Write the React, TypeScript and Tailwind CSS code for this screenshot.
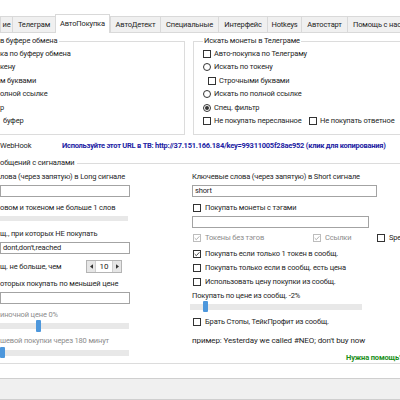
import React from 'react';

const tabs = [
  { label: 'ие', cls: 'w-[12px]' },
  { label: 'Телеграм', cls: 'w-[43px]' },
  { label: 'АвтоПокупка', cls: 'w-[55px]', active: true },
  { label: 'АвтоДетект', cls: 'w-[50px]' },
  { label: 'Специальные', cls: 'w-[58px]' },
  { label: 'Интерфейс', cls: 'w-[49px]' },
  { label: 'Hotkeys', cls: 'w-[34px]' },
  { label: 'Автостарт', cls: 'w-[46px]' },
  { label: 'Помощь с настройкой', cls: 'w-[70px] justify-start pl-[5px]' },
];

function Check({ checked, disabled }: { checked?: boolean; disabled?: boolean }) {
  return (
    <span
      className={`flex h-[8px] w-[8px] shrink-0 items-center justify-center border bg-white ${
        disabled ? 'border-[#bdbdbd]' : 'border-[#333333]'
      }`}
    >
      {checked && (
        <svg viewBox="0 0 6 6" className="h-[6px] w-[6px]">
          <path
            d="M0.7 3.1 2.3 4.7 5.4 1.3"
            fill="none"
            stroke={disabled ? '#a9a9a9' : '#333333'}
            strokeWidth="0.9"
          />
        </svg>
      )}
    </span>
  );
}

function Radio({ checked }: { checked?: boolean }) {
  return (
    <span className="flex h-[8px] w-[8px] shrink-0 items-center justify-center rounded-full border border-[#333333] bg-white">
      {checked && <span className="h-[4px] w-[4px] rounded-full bg-[#333333]" />}
    </span>
  );
}

function CheckRow({
  label,
  checked,
  disabled,
  className = '',
}: {
  label: string;
  checked?: boolean;
  disabled?: boolean;
  className?: string;
}) {
  return (
    <div className={`flex h-[12px] items-center gap-[4px] whitespace-nowrap ${className}`}>
      <Check checked={checked} disabled={disabled} />
      <span className={disabled ? 'text-[#8c8c8c]' : ''}>{label}</span>
    </div>
  );
}

function RadioRow({ label, checked }: { label: string; checked?: boolean }) {
  return (
    <div className="flex h-[13.5px] items-center gap-[3px] whitespace-nowrap">
      <Radio checked={checked} />
      <span>{label}</span>
    </div>
  );
}

function TextBox({ value, className = '' }: { value?: string; className?: string }) {
  return (
    <div
      className={`flex h-[12px] items-center border border-[#a3a3a3] bg-white pl-[2px] whitespace-nowrap ${className}`}
    >
      {value}
    </div>
  );
}

function Slider({
  trackCls,
  thumbCls,
  hCls,
}: {
  trackCls: string;
  thumbCls?: string;
  hCls: string;
}) {
  return (
    <div className={`relative flex items-center ${hCls}`}>
      <div className={`h-[6px] bg-[#e8e8e8] ${trackCls}`} />
      {thumbCls && <div className={`absolute top-0 h-full w-[5px] rounded-[1px] bg-[#4d97dc] ${thumbCls}`} />}
    </div>
  );
}

function Title({ text }: { text: string }) {
  return <div className="-mt-[7px] h-[12px] w-fit bg-white px-[1px] whitespace-nowrap">{text}</div>;
}

export default function App() {
  return (
    <div className="h-[400px] w-[400px] overflow-hidden bg-white font-['Roboto',sans-serif] text-[7.5px] leading-[12px] tracking-[-0.15px] text-[#1e1e1e]">
      <div className="h-[15px]" />

      {/* tab strip */}
      <div className="flex h-[18px] items-end border-b border-[#d9d9d9] whitespace-nowrap">
        {tabs.map((t) =>
          t.active ? (
            <div
              key={t.label}
              className={`-mb-px flex h-[19px] shrink-0 items-center justify-center border-x border-t border-[#d9d9d9] bg-white ${t.cls}`}
            >
              {t.label}
            </div>
          ) : (
            <div
              key={t.label}
              className={`flex h-[16px] shrink-0 items-center justify-center border-t border-l border-[#d9d9d9] bg-[#f0f0f0] ${t.cls}`}
            >
              {t.label}
            </div>
          )
        )}
      </div>

      {/* clipboard / telegram */}
      <div className="mt-[8px] flex">
        <div className="h-[94px] w-[185px] shrink-0 border border-l-0 border-[#dcdcdc]">
          <div className="-mt-[7px] h-[12px] w-fit bg-white pr-[2px] whitespace-nowrap">в буфере обмена</div>
          <div className="flex h-[13.5px] items-center whitespace-nowrap">ка по буферу обмена</div>
          <div className="flex h-[13.5px] items-center whitespace-nowrap">кену</div>
          <div className="flex h-[13.5px] items-center whitespace-nowrap">м буквами</div>
          <div className="flex h-[13.5px] items-center whitespace-nowrap">олной ссылке</div>
          <div className="flex h-[13.5px] items-center whitespace-nowrap">р</div>
          <div className="flex h-[13.5px] items-center pl-[3px] whitespace-nowrap">буфер</div>
        </div>
        <div className="ml-[8px] h-[94px] flex-1 border border-r-0 border-[#dcdcdc] pl-[9px]">
          <Title text="Искать монеты в Телеграме" />
          <div className="flex h-[13.5px] items-center gap-[3px] whitespace-nowrap">
            <Check />
            <span>Авто-покупка по Телеграму</span>
          </div>
          <RadioRow label="Искать по токену" />
          <div className="flex h-[13.5px] items-center gap-[3px] pl-[5px] whitespace-nowrap">
            <Check />
            <span>Строчными буквами</span>
          </div>
          <RadioRow label="Искать по полной ссылке" />
          <RadioRow label="Спец. фильтр" checked />
          <div className="flex h-[13.5px] items-center whitespace-nowrap">
            <div className="flex w-[106px] shrink-0 items-center gap-[3px]">
              <Check />
              <span>Не покупать пересланное</span>
            </div>
            <div className="flex items-center gap-[3px]">
              <Check />
              <span>Не покупать ответное</span>
            </div>
          </div>
        </div>
      </div>

      {/* webhook */}
      <div className="mt-[5px] flex h-[12px] items-center whitespace-nowrap">
        <span className="w-[62px] shrink-0">WebHook</span>
        <span className="cursor-pointer font-bold tracking-[-0.25px] text-[#2222a3]">
          Используйте этот URL в TB: http://37.151.166.184/key=99311005f28ae952 (клик для копирования)
        </span>
      </div>

      {/* signals */}
      <div className="mt-[11px] h-[201px] border border-x-0 border-[#dcdcdc]">
        <div className="-mt-[7px] h-[12px] w-fit bg-white pr-[2px] whitespace-nowrap">общений с сигналами</div>
        <div className="flex pt-[2px]">
          <div className="w-[130px] shrink-0 whitespace-nowrap">
            <div className="h-[12px]">лова (через запятую) в Long сигнале</div>
            <TextBox className="mt-[2px] w-[130px]" />
            <div className="mt-[5px] h-[12px]">овом и токеном не больше 1 слов</div>
            <div className="mt-[2px] h-[5px] w-[128px] bg-[#e8e8e8]" />
            <div className="mt-[7px] h-[12px]">щ., при которых НЕ покупать</div>
            <TextBox className="mt-[2px] w-[130px]" value="dont,don't,reached" />
            <div className="mt-[6px] flex h-[13px] items-center">
              <span className="w-[86px] shrink-0">щ. не больше, чем</span>
              <div className="flex h-[13px] w-[36px] border border-[#b4b4b4] bg-white">
                <div className="flex w-[9px] items-center justify-center border-r border-[#cfcfcf] bg-[#e6e6e6]">
                  <svg viewBox="0 0 4 6" className="h-[5px] w-[3px]">
                    <path d="M4 0 0 3 4 6Z" fill="#333333" />
                  </svg>
                </div>
                <div className="flex flex-1 items-center justify-center text-[8px] tracking-normal">10</div>
                <div className="flex w-[9px] items-center justify-center border-l border-[#cfcfcf] bg-[#e6e6e6]">
                  <svg viewBox="0 0 4 6" className="h-[5px] w-[3px]">
                    <path d="M0 0 4 3 0 6Z" fill="#333333" />
                  </svg>
                </div>
              </div>
            </div>
            <div className="mt-[5px] h-[12px]">оторых покупать по меньшей цене</div>
            <TextBox className="mt-[2px] w-[130px]" />
            <div className="mt-[5px] h-[12px] text-[#8c8c8c]">иночной цене 0%</div>
            <Slider hCls="-mt-[1px] h-[12px]" trackCls="w-[129px]" thumbCls="left-[36px]" />
            <div className="mt-[3px] h-[12px] text-[#8c8c8c]">шевой покупки через 180 минут</div>
            <Slider hCls="h-[11px]" trackCls="w-[129px]" thumbCls="left-0" />
          </div>

          <div className="ml-[62px] flex-1 whitespace-nowrap">
            <div className="h-[12px]">Ключевые слова (через запятую) в Short сигнале</div>
            <TextBox className="mt-[2px] w-[185px]" value="short" />
            <CheckRow className="mt-[5px] pl-[1px]" label="Покупать монеты с тэгами" />
            <TextBox className="mt-[2px] w-[177px]" />
            <div className="mt-[4px] flex h-[12px] items-center pl-[1px]">
              <CheckRow className="w-[120px] shrink-0" label="Токены без тэгов" checked disabled />
              <CheckRow className="w-[64px] shrink-0" label="Ссылки" checked disabled />
              <CheckRow label="Spec" />
            </div>
            <CheckRow className="mt-[4px] pl-[1px]" label="Покупать если только 1 токен в сообщ." checked />
            <CheckRow className="mt-[2px] pl-[1px]" label="Покупать только если в сообщ. есть цена" />
            <CheckRow className="mt-[2px] pl-[1px]" label="Использовать цену покупки из сообщ." />
            <div className="mt-[2px] h-[12px]">Покупать по цене из сообщ. -2%</div>
            <Slider hCls="-mt-[1px] -ml-[2px] h-[11px]" trackCls="w-[172px]" thumbCls="left-[13px]" />
            <CheckRow className="mt-[4px] pl-[1px]" label="Брать Стопы, ТейкПрофит из сообщ." />
            <div className="mt-[7px] h-[12px] text-[8px] tracking-[-0.1px]">
              пример: Yesterday we called #NEO; don't buy now
            </div>
            <div className="mt-[5px] h-[12px] pl-[154px] font-bold text-[#1a8f1a]">Нужна помощь?</div>
          </div>
        </div>
      </div>

      {/* bottom panel */}
      <div className="mt-[14px] h-[22px] border-y border-[#cfcfcf] bg-[#f0f0f0]" />
    </div>
  );
}
